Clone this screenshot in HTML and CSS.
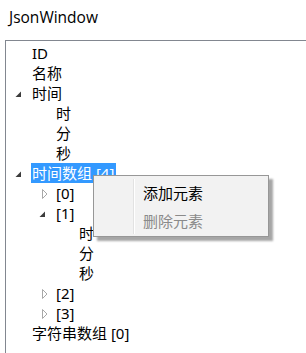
FILE: index.html
```html
<!DOCTYPE html>
<html lang="zh">
<head>
  <meta charset="UTF-8">
  <title>JsonWindow</title>
  <link rel="stylesheet" href="styles.css">
</head>
<body>

<!-- Title -->
<div class="title">JsonWindow</div>

<!-- Tree -->
<div class="tree-box">
  <ul class="tree">
    <li><div class="row"><span class="exp"></span><span class="label">ID</span></div></li>
    <li><div class="row"><span class="exp"></span><span class="label">名称</span></div></li>
    <li>
      <div class="row"><span class="exp open"><svg width="7" height="7" viewBox="0 0 7 7"><path d="M6 0.5 L6 6 L0.5 6 Z" fill="#3c3c3c"/></svg></span><span class="label">时间</span></div>
      <ul>
        <li><div class="row"><span class="exp"></span><span class="label">时</span></div></li>
        <li><div class="row"><span class="exp"></span><span class="label">分</span></div></li>
        <li><div class="row"><span class="exp"></span><span class="label">秒</span></div></li>
      </ul>
    </li>
    <li>
      <div class="row"><span class="exp open"><svg width="7" height="7" viewBox="0 0 7 7"><path d="M6 0.5 L6 6 L0.5 6 Z" fill="#3c3c3c"/></svg></span><span class="label selected">时间数组 [4]</span></div>
      <ul>
        <li><div class="row"><span class="exp shut"><svg width="6" height="10" viewBox="0 0 6 10"><path d="M0.5 0.5 L5 5 L0.5 9.5 Z" fill="none" stroke="#a8a8a8"/></svg></span><span class="label">[0]</span></div></li>
        <li>
          <div class="row"><span class="exp open"><svg width="7" height="7" viewBox="0 0 7 7"><path d="M6 0.5 L6 6 L0.5 6 Z" fill="#3c3c3c"/></svg></span><span class="label">[1]</span></div>
          <ul>
            <li><div class="row"><span class="exp"></span><span class="label">时</span></div></li>
            <li><div class="row"><span class="exp"></span><span class="label">分</span></div></li>
            <li><div class="row"><span class="exp"></span><span class="label">秒</span></div></li>
          </ul>
        </li>
        <li><div class="row"><span class="exp shut"><svg width="6" height="10" viewBox="0 0 6 10"><path d="M0.5 0.5 L5 5 L0.5 9.5 Z" fill="none" stroke="#a8a8a8"/></svg></span><span class="label">[2]</span></div></li>
        <li><div class="row"><span class="exp shut"><svg width="6" height="10" viewBox="0 0 6 10"><path d="M0.5 0.5 L5 5 L0.5 9.5 Z" fill="none" stroke="#a8a8a8"/></svg></span><span class="label">[3]</span></div></li>
      </ul>
    </li>
    <li><div class="row"><span class="exp"></span><span class="label">字符串数组 [0]</span></div></li>
  </ul>
</div>

<!-- Context menu -->
<div class="menu">
  <div class="menu-icons"></div>
  <div class="menu-items">
    <div class="menu-item">添加元素</div>
    <div class="menu-item disabled">删除元素</div>
  </div>
</div>

</body>
</html>
```

FILE: styles.css
```css
body { margin: 0; height: 353px; overflow: hidden; position: relative; background: #fff; font-family: "Noto Sans", "Noto Sans CJK SC", sans-serif; color: #000; }
.title { padding: 8px 0 0 9px; height: 40px; box-sizing: border-box; font-family: "Open Sans", sans-serif; font-size: 15.5px; line-height: 18px; }
.tree-box { margin-left: 5px; height: 313px; border: 1px solid #828790; border-right: none; border-bottom: none; padding-top: 2px; box-sizing: border-box; }
.tree, .tree ul { list-style: none; margin: 0; padding: 0; }
.tree { padding-left: 7px; }
.tree ul { padding-left: 24px; }
.tree ul ul { padding-left: 23px; }
.row { display: flex; align-items: center; height: 20px; font-size: 15px; line-height: 20px; }
.exp { width: 19px; height: 20px; display: flex; align-items: center; flex-shrink: 0; }
.exp.open svg { margin: 3px 0 0 2px; }
.exp.shut svg { margin: 1px 0 0 5px; }
.label { padding: 0 2px 0 1px; margin-left: -1px; white-space: nowrap; }
.selected { background: #3399ff; color: #fff; }

/* Context menu */
.menu { position: absolute; left: 93px; top: 175px; width: 176px; height: 62px; box-sizing: border-box; display: flex; background: #f2f2f2; border: 1px solid #979797; padding: 3px 0 2px 2px; box-shadow: 4px 4px 2px rgba(0, 0, 0, 0.35); }
.menu-icons { width: 37px; border-right: 1px solid #e2e2e2; box-shadow: 1px 0 0 #fff; }
.menu-items { flex: 1; padding-left: 9px; }
.menu-item { height: 28px; line-height: 28px; font-size: 15px; white-space: nowrap; }
.menu-item.disabled { color: #8a8a8a; }
```
